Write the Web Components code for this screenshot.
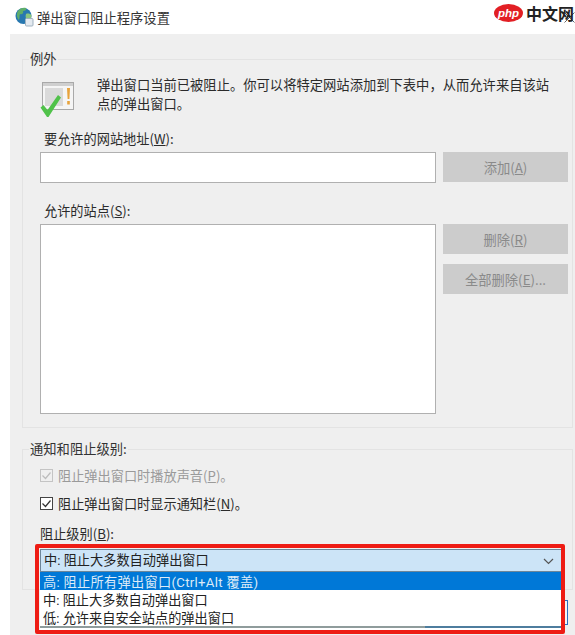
<!DOCTYPE html>
<html>
<head>
<meta charset="utf-8">
<title>弹出窗口阻止程序设置</title>
<style>
  html, body { margin: 0; height: 100%; overflow: hidden; background: #fff; }
  body { font: 13.3px "Noto Sans CJK SC", "Noto Sans", sans-serif; color: #2b2b2b; }
</style>
</head>
<body>
<popup-settings>
  <p-title slot="title">弹出窗口阻止程序设置</p-title>
</popup-settings>

<template id="t-title">
  <style>
    :host { display: flex; align-items: center; height: 34px; padding-left: 15px; gap: 3px; font-size: 13.3px; color: #333; position: relative; }
    svg { flex: none; }
    .close { position: absolute; right: 0; top: 12px; }
  </style>
  <svg width="19" height="20" viewBox="0 0 19 20">
    <circle cx="8.500" cy="9" r="8" fill="#2878b0"/>
    <path d="M3 4c2-3 5-3.500 8-3 1 2-1 3-3 3 1 2-1 4-3 3-1 2 0 4-1 6-2-2-3-6-1-9z" fill="#5fae6a"/>
    <path d="M11 7c2-1 4.500 0 5.500 1 0 2-.5 3-1.500 4l-3 1c-1-2-2-3-1-6z" fill="#8cc57f"/>
    <rect x="10.500" y="11.500" width="7.500" height="7.500" rx="1" fill="#e4eaf0" stroke="#9fb1bf"/>
  </svg>
  <slot></slot>
  <svg class="close" width="11" height="11" viewBox="0 0 11 11"><path d="M.5 .5l10 10M10.500 .5l-10 10" stroke="#666" fill="none"/></svg>
</template>

<template id="t-group">
  <style>
    :host { display: block; border: 1px solid #e3e3e3; position: relative; box-sizing: border-box; }
    .legend { position: absolute; left: 6px; top: -10px; padding: 0 1px; background: #efefef; font-size: 13.3px; line-height: 18px; color: #333; }
  </style>
  <div class="legend"><slot name="legend"></slot></div>
  <slot></slot>
</template>

<template id="t-button">
  <style>
    :host { display: flex; align-items: center; justify-content: center; width: 125px; height: 30px; background: #cccccc; color: #8a8a8a; font-size: 13.3px; }
  </style>
  <slot></slot>
</template>

<template id="t-check">
  <style>
    :host { display: flex; align-items: center; gap: 5px; height: 20px; font-size: 13.2px; color: #2b2b2b; }
    :host([disabled]) { color: #9a9a9a; }
    .box { width: 13px; height: 13px; box-sizing: border-box; border: 1px solid #444; background: #fff; display: block; }
    :host([disabled]) .box { border-color: #c4c4c4; background: #efefef; }
    path { stroke: #333; }
    :host([disabled]) path { stroke: #bcbcbc; }
  </style>
  <svg class="box" viewBox="0 0 11 11"><path d="M1.500 5.500l3 3 5-6" fill="none" stroke-width="1.200"/></svg>
  <span><slot></slot></span>
</template>

<template id="t-combo">
  <style>
    :host { display: block; position: absolute; left: 40px; top: 549px; width: 521px; height: 81px; font-family: Roboto, "Noto Sans CJK SC", sans-serif; font-size: 13.2px; color: #222; }
    .frame { position: absolute; left: -5px; top: -5px; width: 530px; height: 90px; box-sizing: border-box; border: 4px solid #ee1c14; border-radius: 2px; }
    .field { height: 23px; box-sizing: border-box; background: #cce4f7; border: solid #6d8699; border-width: 1px 0 1px 1px; display: flex; align-items: center; justify-content: space-between; padding: 1px 7px 0 3px; }
    .list { height: 58px; background: #fff; line-height: 20px; }
    .line { position: absolute; left: 0; right: 0; top: 77px; height: 2px; background: linear-gradient(90deg, #8f9c9c 0 385px, #4d7d9e 385px); }
    ::slotted(span[slot="value"]) { line-height: 18px; }
    ::slotted(:not([slot])) { display: block; box-sizing: border-box; padding: 1px 0 0 3px; height: 18px; }
    ::slotted([selected]) { background: #0078d7; color: #dcebf8; letter-spacing: .3px; }
  </style>
  <div class="field"><slot name="value"></slot>
    <svg width="11" height="7" viewBox="0 0 11 7"><path d="M1 1l4.500 4.500L10 1" fill="none" stroke="#555" stroke-width="1.200"/></svg>
  </div>
  <div class="list"><slot></slot></div>
  <div class="line"></div>
  <div class="frame"></div>
</template>

<template id="t-settings">
  <style>
    :host { display: block; height: 635px; position: relative; overflow: hidden; }
    .panel { background: #efefef; margin-left: 10px; padding: 25px 2px 0 12px; height: 601px; box-sizing: border-box; }
    .exc { height: 369px; padding: 21px 0 0 17px; }
    .notice { display: flex; gap: 23px; height: 48px; font-size: 13.3px; line-height: 18.500px; color: #2b2b2b; }
    .notice svg { flex: none; margin-top: 1px; }
    .notice p { margin: -5px 0 0; width: 458px; }
    .label { font-size: 13.2px; line-height: 20px; color: #2b2b2b; padding-left: 4px; }
    .row { display: flex; gap: 7px; align-items: flex-start; margin-top: 3px; }
    .input { width: 396px; height: 31px; box-sizing: border-box; background: #fff; border: 1px solid #b0b0b0; }
    .sites { width: 396px; height: 190px; box-sizing: border-box; background: #fff; border: 1px solid #b0b0b0; }
    .col { display: flex; flex-direction: column; gap: 10px; }
    .notify { height: 141px; margin-top: 21px; padding: 15px 0 0 17px; }
    .notify .label { margin-top: 11px; padding-left: 0; }
    .notify p-check + p-check { margin-top: 8px; }
    .okbtn { position: absolute; left: 444px; top: 600px; width: 124px; height: 25px; box-sizing: border-box; border: 1px solid #2a6fc0; background: #f4f4f4; }
    .mark { position: absolute; left: 494px; top: 1px; display: flex; align-items: center; gap: 3px; white-space: nowrap; font: 700 16px "Noto Sans CJK SC", sans-serif; color: #222; }
    .php { width: 29px; height: 18px; border-radius: 50%; background: #e21f24; color: #fff; font: italic 700 11.500px "Liberation Sans", sans-serif; display: flex; align-items: center; justify-content: center; }
  </style>
  <slot name="title"></slot>
  <div class="panel">
    <p-group class="exc">
      <span slot="legend">例外</span>
      <div class="notice">
        <svg width="34" height="36" viewBox="0 0 34 36">
          <rect x="2.500" y=".5" width="31" height="27" fill="#f5f5f5" stroke="#a9a9a9"/>
          <rect x="3" y="1" width="30" height="3" fill="#cfcfcf"/>
          <rect x="5" y="6" width="18" height="18" fill="#dadada"/>
          <path d="M27 6h3l-.6 11h-1.800zM27.200 19h2.600v3.500h-2.600z" fill="#e8a33c"/>
          <path d="M.5 25.500l3-2.500 4 5L18 13l3 2.500L8.500 35h-1.500z" fill="#50c24a"/>
        </svg>
        <p>弹出窗口当前已被阻止。你可以将特定网站添加到下表中，从而允许来自该站点的弹出窗口。</p>
      </div>
      <div class="label">要允许的网站地址(<u>W</u>):</div>
      <div class="row">
        <div class="input"></div>
        <p-button>添加(<u>A</u>)</p-button>
      </div>
      <div class="label" style="margin-top:18px">允许的站点(<u>S</u>):</div>
      <div class="row">
        <div class="sites"></div>
        <div class="col">
          <p-button>删除(<u>R</u>)</p-button>
          <p-button>全部删除(<u>E</u>)...</p-button>
        </div>
      </div>
    </p-group>
    <p-group class="notify">
      <span slot="legend">通知和阻止级别:</span>
      <p-check disabled>阻止弹出窗口时播放声音(<u>P</u>)。</p-check>
      <p-check>阻止弹出窗口时显示通知栏(<u>N</u>)。</p-check>
      <div class="label">阻止级别(<u>B</u>):</div>
    </p-group>
  </div>
  <div class="okbtn"></div>
  <p-combo>
    <span slot="value">中: 阻止大多数自动弹出窗口</span>
    <span selected>高: 阻止所有弹出窗口(Ctrl+Alt 覆盖)</span>
    <span>中: 阻止大多数自动弹出窗口</span>
    <span>低: 允许来自安全站点的弹出窗口</span>
  </p-combo>
  <div class="mark"><span class="php">php</span>中文网</div>
</template>

<script>
function define(tag, tpl) {
  customElements.define(tag, class extends HTMLElement {
    constructor() {
      super()
      this.attachShadow({ mode: 'open' })
      this.shadowRoot.appendChild(document.getElementById(tpl).content.cloneNode(true))
    }
  })
}
define('p-title', 't-title')
define('p-group', 't-group')
define('p-button', 't-button')
define('p-check', 't-check')
define('p-combo', 't-combo')
define('popup-settings', 't-settings')
</script>
</body>
</html>
